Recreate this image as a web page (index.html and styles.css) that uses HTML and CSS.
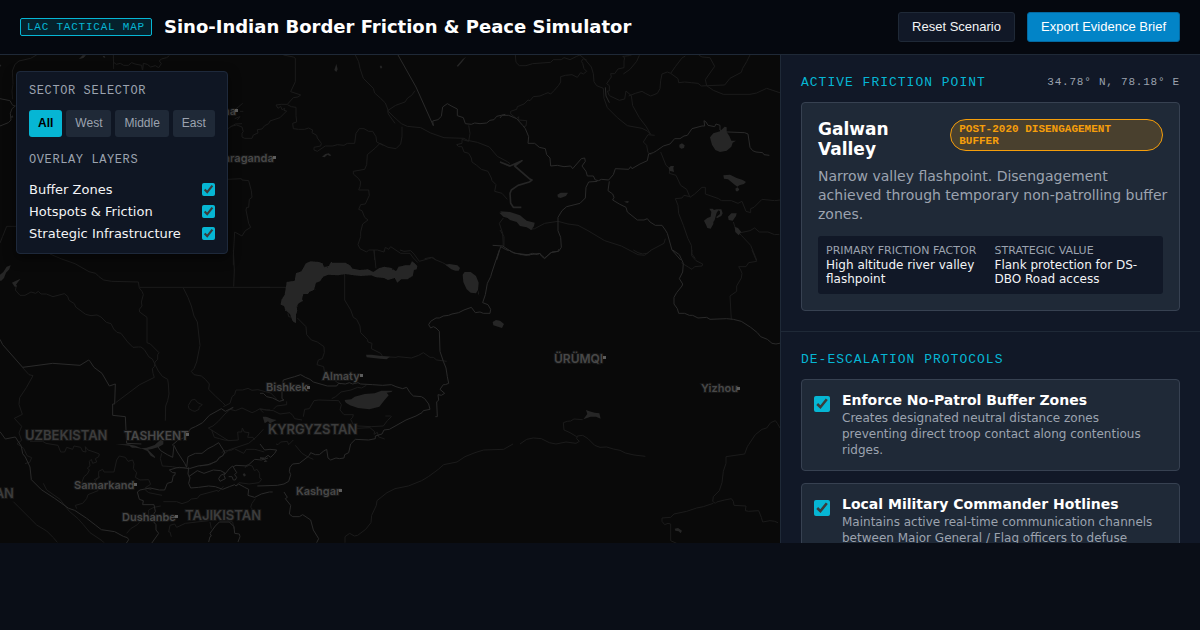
FILE: index.html
```html
<!DOCTYPE html>
<html lang="en">
<head>
    <meta charset="UTF-8">
    <meta name="viewport" content="width=device-width, initial-scale=1.0">
    <title>Sino-Indian Border Friction &amp; Peace Simulator</title>
    <link rel="stylesheet" href="styles.css">
</head>
<body>
    <header class="header">
        <div class="brand">
            <span class="badge">LAC TACTICAL MAP</span>
            <h1>Sino-Indian Border Friction &amp; Peace Simulator</h1>
        </div>
        <div class="actions">
            <button type="button" class="btn">Reset Scenario</button>
            <button type="button" class="btn btn-primary">Export Evidence Brief</button>
        </div>
    </header>

    <main class="main">
        <section class="map-area">
            <svg class="map" viewBox="0 0 780 488" preserveAspectRatio="xMinYMin slice" role="img" aria-label="Map of Central Asia">
                <defs>
                    <!-- roughens the lake shores -->
                    <filter id="shore">
                        <feTurbulence type="fractalNoise" baseFrequency="0.25" numOctaves="2" seed="4"/>
                        <feDisplacementMap in="SourceGraphic" scale="5" xChannelSelector="R" yChannelSelector="G"/>
                    </filter>
                </defs>
                <!-- north west -->
                <g transform="translate(0 -55) scale(.33333)">
                    <path class="line" d="M110 165l-18 10-35 8-12 10-8 20 2 40-3 20 2 25M340 165l1 42M341 187l8 6 12-3 10 6 14 0 10-8 10 4 20 4 2 14M428 210l2-20 12 3 10 8 14-4 10 6 8-12-6-8 6-6 16-4 8-6M50 679H20l-12 30-8 20"/>
                    <path class="border" d="M0 296l30 6 8 14 8 2-10 8-5 14 2 20-8 8-25 10"/>
                    <path class="water" d="M236 178l12-12 10 0-8 8zM308 168l6 0 2 6-6-2zM32 350l6-4 2 6-5 2zM0 193l4 4-4 3z"/>
                </g>
                <!-- south west -->
                <g transform="translate(0 195) scale(.33333)">
                    <path class="line" d="M150 12l35 15 40 14 42 24 20 5 10 10 14 10 24 4 80 2 3 18 8 10 4 10-6 22 2 12-8 10 1 8 22 16v76l10 4 26 26-4 6 0 14-8 8-2 14-6 6 2 14 4 12-44 22-72 54M700 0l3 60-2 50M420 112H810M50 105l-4 15 14 16 15 0 18-10 14 4 8-6 8 8 16 0 20 8 34-9 10 8 4 12 16 10 4 10 30 22 16 4 18-2 12 6 16 16 14 4 8 16 10 10 12 3 20 26 16 16 16-1 8 0 10 8 14 22 10 6 8 16 10 20 12 16 16 9 2 14 2 30-4 20-6 16-1 44M550 114l14 28 10 26 8 30 10 18 8 70-10 50-8 20-8 8 8 10 22 4 12 10 12 14-2 16 20 20 22 20 8 8M67 352l20 22 12 3-20 36-20 30-2 20 10 30-24 12 22 24-8 20 8 22-14 10 20 14 10 22 14 6-6 14-14 4M90 574l38 0 10 6 36 6 8 20 12 0 6-14 18 6 4-10 20 4 6 12 10 2-2-16 8 10 24 8 10 4-2 8-10 6 4 10-12 4-4-12-6 6 2 14-8 6 6 6-6 12-10 8-6 16 4 14-10 8M300 680l-12 10-6 12 12 4 0 16-30 12-4 12-12 14-22 6 4 10M282 690l14-8 0-18 12-6 4 8 30 0 8-36 8-12 18 4 8 12 14-4 4 12-2 14 10 12-4 14 14 8 26-1 6 14-16 10 18 6M40 755l50 50 20 20 30 18 20 20 12 14M130 700l10 20 40 28 28 36 26 22 16 18 20 24 36 24 6 6M565 466l10-16 10-2 8 10 14 6-10 8 0 6-12 6-8-2-10-6-2-8zM670 470l20-10 6-20 8-6 4-14 20 0 16-5 12 6 18-2 22 6 16 4 14 14 4 6M690 478l16 4 20-8 30 14 10-4 14-8 20 4 10 0M625 534l60 38 30-2-2-24 12 0 2-12 6 12 14 2-4 14 16 0 4 8M625 534l14-6 16-14 20-22 20-18 4 0M635 540l8 22 16 4 14 4 20 2M665 608l10-6 16 0 12-6 28 14 8-12 26 0 28 8M600 648l30-4 20-12 36-32 60-20 24-20 20-22M490 755l40 0 16 6 18-6 10-8 18-2 8-10 52-14 2 4 8-6 8-10M485 610l-4 16 6 22 30 2 20 4 20-2M380 850l12-14 20-12 10-12 24-14 0-18 16-8 20-4M436 720l10 8 40 8M735 654l6-10 16 4 6 14 8-4 8 12 0 14 6 4-8 10-30 4-30-4-8 8M514 860l-4-14-4 0 4-20 14-4 6 10 26-12 70-8M630 816l4 20M672 808l26 8 4 20M766 746l-10 14-4 12 8 8"/>
                    <path class="border" d="M0 268l8 16 60 68 90-12 82 6 26-16 4 4 12 18 24 18 22 38 18-6-2 60-6 0 0 34 38 4 4 80 44 2M0 545l16 22 30-6 18 28 4 22 8 10 14 30 4 38 30 30 40 26 42 30 18 6 36 24 26 20 18 14 40 6 26 14 12 4 4 6-8 12 2 10M472 588l10 14 20 12 16 8 4-36 10 20 22 34 6 12 4-32 22-10 20 0 18-14 16-8 16-10 18 28-6 12-10 4-8 12-26 10-30 4-26 8-30-4-10 2-20 6 10 8 8 0-2 8-4 0-4 20-14 4-8 20-16 0-28-6-30 6-8 6 6 22 12 4-2 12 34 0 4 20-8 14 0 14 10 12 0 16 8 10-24 34-2 10M516 586l16-14 26-12 6-12 8-12 14-6 22-12 20-22 36-20 12 8 24-12M566 652l-2 20 6 12-4 16 6 14 24-2 30-4 20 2 22 8 20-8 16-6 4 4 8-6 18 10 12 6-2 18 20 6 20-10 24-6 10 0M566 680l26-18 20 8 28-10 22 2 14 8-14 6-6 10 4 8 16-8-4-10 16-20 10-8 12 20-6 6 6 8-4 8-6 0-4-10-10 0M700 650l8-4 34 2 22-20 20 2 20-6M626 876l4-16 4-2-4-8 16-22 12-12 30 0 14 14 2 20 14 2 2 8-6 16"/>
                    <path class="water" d="M0 74l10-8 10-16 12-4-4 12-10 10-6 16-8 8H0zM36 98l12-6 14-6-8 10-6 8 2 6-6 0zM346 583l40 0 20 4 18 8 16-2 24-8 20-18 6 2 0 14-14 8-20 6-12 2 20 20 2 6-14-8-10-14-14-6-22-4-10 0-8-6zM792 502l18 2v10zM728 672l6-2 4 6-6 4z"/>
                </g>
                <!-- south centre -->
                <g transform="translate(260 195) scale(.33333)">
                    <path class="line" d="M0 112H80M254 60v90l18 30 8 22 10 6 10 20 2 20 20 20 2 8 12 4-2 16 28 14 6 10 40 2 6-2 40 4 22-8 14-8 20 14 10 0 10 8 30 4M342 0l6 55M420 0l12 4 20-2 10 10 16 22 28-8 12-4 10 8 20 8 14 8M112 204l26 26 2 24 14 16 18 6 20 14 1 18-6 18-12 4-4 14 20 6 2 14 18 14 6 2 12 16 14 6M215 446l12-6 16-14 30-6 20-8 12 2 14-8M130 500l4-22 14-2 14-24 14-2 60 2 8 12-4 16 12 14 28 0-2 8-6 6 8 16 14 4 40 2 36-2 12-16 12-12-2-2-16 0M40 478l10-10 30-4 0-10M0 478l40 4 20 10 30-4 8 8 6 10 22 4M255 878l0-18 14-10 14 8 10-2 24-18 16-20 2-22 14-30 2-14 30-24 24-12 40-8 40-16 20-12 30-22 16-14 40-8 24-16 30-12 26-8 60-2 28-16M290 535l40-2 14 12-2 8 10-6 4 14 18 6M106 586l20 24 20 12 14 6M100 570l-14 14-4-10-20 2-8 8-6-2M0 478l10 10M88 180l-4 10 2 10 14 2M372 0l2 4"/>
                    <path class="border" d="M70 390l20-6 14-4 18-6 14 8 14 6 10 8 14 4 28 8 28 0 6-8 20 2 12-4 10 4 16-4 8 4 36 2 30 2 26-2 14 6 20 6 12-4 10 16 10 10 24 2 10 6 12 16 4 16-20 4-4 6-18 10-30 12-50 28-16 2-6 12-20 6 0 8-20 4-40-2-14 14-6 26-12 6-2 10-14 2-10-2-16 6-8-6-4-26-10 6-12 10-12 0-14-6-4 8-4 4-26 20-20 2-8 10-2 12 4 10-6 20-14 8-20 4-60 2M70 390l-4 20 0 36 6 4-14 4-20-10-18-4-10-10-10 0M718 0l-10 30-12 36-4 14-10 20-6 34-8 24 16 6 8 14-2 12-20 0-10-4-14 2-12-16-22 8-16 8-20 4-10 4-16 2-12 6-10 0-16 10-6 10 6 10 8-4 8 4 10 10 2 60 10 30 8 20 4 26 4 20-10 4-6 0-10 14 14 12-10 6-10-2 2 16-6 6 2 44-6 0M746 0l20 10 44 5M72 726l10 16-6 4 16 20-4 26 10 8 20 0 10-6 24 16 8 30 16 26-6 12M0 582l14 18 16-2 20 2-6 10-12 12-8-6-10 8-14 0 12 2 8 8-8 0"/>
                    <path class="water" filter="url(#shore)" d="M64 150l10-16 6-38 24-4 4-22 16-6 14-24 14-6 24 2 12 4 4 12 14-4 6-10 20 0 24 0 14 8 8 10 22 4 24-2 16 8 18-12 16-4 20 4 14 10 8-14 20-4 14 0 6-12 8 6 8 8-2 10-8 2-4 18-16 10-18 0-12 10-8-14-20 6-12-6-24-2-14-6-30 2-24-2-24-4-20 4-32-2-14 6-10 14-12 4-6 22-14 6-4 6-14 0-4 16 4 4-14 8-6 10 2 12-4 12 0 26-10-6-8-22-14-12-4-12-10-4z"/>
                    <path class="water" d="M556 44l12-2 24 4 8 8-4 8-10 0-12-4-10-8zM608 74l6-8 18 0 16 12 8 20-2 22-6 10-16-2-12-10-10-22zM608 94l-2-20M654 120l4 18 8 16-12-24zM698 216l10-6 12 2 12 10-6 12-12-4-14-4zM318 314l16 0 30 4 26 2-10 8-20-2-40-4zM254 450l20-2 10-8 30-8 30-2 20-8 34 0-4 4-14 2 6 8-14 16-14 18-30 8-34-4-24-8-10-6-4-4zM8 500l10 0 20 8 12 2-20 10-6-6-10 6z"/>
                </g>
                <!-- south east -->
                <g transform="translate(520 195) scale(.33333)">
                    <path class="line" d="M0 582l20-14 20-4 24 2 24 12 20 4 30-6 30 4 10-6-8-8 2-8 16-2 16 10 20 20 16 6 20-1 20 6 20 4 16 8 26 6 34 4M170 560l-20-12-18-8-2-22 12-4 10-1 10-6 26 2M340 0l14 8 14 4 14-2 12-10M516 0l-2 16 14 16 20 10-2 6-22 2-8 8-10-6-16-10-6-4M696 0l14 34-24 4-8 12-22 0 6 10 4 10-2 14-14 24 0 16-20 14 4 70M780 534l-8-14-6-8-14 6-12 16-14 4-20 16-20 30-4 6-8 22-56 8 0 20-8 24-4 34-8 24-18 18-2 14 8 6 4-4 24-6 20-4 6 8 2 12 36 2-2 14 10 2 30-2 8 20 4 14 22-4 14 2 10 4M580 760l-30 10-20 4-30 10-38 8-10 10-26 2 0 10 8 10 10-4 8 2 0 50 18 8"/>
                    <path class="border" d="M0 14l24 0 14-4 14 4 8-4 4 8 10 8 18-18 22-4 2-6M458 0l20 14 12 26-2 26-10 20 10 16-2 6-16 20-8 14 0 20 10 14 4 14 18 0 14 6 10 0 16 8 26-2 10 6 50-2 20 2 24 6 28 18 20 16 10 12 20 8 14 12 12 2 20-4"/>
                    <path class="water" d="M190 508l12-16-4-12 10 4 16 4 14 2 4 16-14-6-16 0zM464 836l10-2 12 8-4 8-6-6-10-2z"/>
                </g>
                <!-- north centre -->
                <g transform="translate(220 -5) scale(.33333)">
                    <path class="line" d="M190 15l30 6 6 4 0 70-14 30 30 10-8 6-14 2-18 20-18 0-16 2 6 10 8-6 4 10 8-4-2 6 8 2-20 20-30 10-4 8-12 6-8 10-14 2 2 10-14 6-4 10-12 0-10 0-8-4 0-12 4-4-4-14-16-6-18 4-10 10-10 2M202 164l12 6 14 2 0 24 2 20-12 4 2 16 16 2 18 0 12-4 12 6-2 8 14 8 2 8 12 16-2 8-20 4 0 8 10 4 24-16 22 0 14-4 20 2 10-6 22 0 4-30 10-14 14 0 14 8 12 0 10 16 2 16 20 10M406 15l10 20 4 20 10 30 30 30 4 14 18 16 14 14 10 26 16 16 22 20 18 8 40 4 30 16 40 14 60 2 10 6 30 6 36 14 24 28 30 16 8 6M546 230l0 30-4 22-14 14-24-4-24-12-14 14-24 20-2 30-6 14-34 6 0 8 16 14 6 10-2 14-4 10 30 0 2 16-12 26-14 2-6 14 10 4 8 20 10 8-16 12-6 24 0 14-8 24 6 12 20 10 6-6 26 0 20 6 4-14 10 6 6-8 30 20 28 0 10 14 14 14M462 600l2 30M585 122l-10 14-12 8-8 12-28 10-24 16 2 10 20 28M24 236l22-14 20-1M24 388l40-2 2 4 20 2 8 30 2 20-8 6-2 24-6 0-2 8 8 40 6 12-16 10-10 16-22-12-4 70v30M746 226l4 24-4 24-20-6 0 12-16 4 6 6 10 0 6 16 14 4 8 14 2 12 14 10 14 12 20 6 10 20 2 8 12 12-4 20 22 6 16 18M850 504l-12 16 10 30 2 40M46 178l10-8 12-10M44 206l16-6-8 10M60 184l10 0M614 626l20-4 14 8"/>
                    <path class="border" d="M534 15l54 96 52 116-2-14 16-4 10-10 4-28 14-10 14 8 16 8 0 20 18 6 6 18 18 2 10-4 16 2 20-2 10-8 12-2 8-10 26-6M830 630l12-40 14 8 10 4"/>
                    <path class="water" d="M343 60l6-18 4 16-4 8zM479 50l4-4 4 6-4 4zM306 320l10-8 10-2 8 6-4 2-8-4-8 8zM710 48l18-20 10-8-10 14-14 16zM838 488l14-2 18 2v18l-20-6z"/>
                </g>
                <!-- north east -->
                <g transform="translate(500 -5) scale(.33333)">
                    <path class="line" d="M46 15l2 22 10 10 20 0 20-6 54-4 8-8 24 0 8-6 18 6 20-10 10-4 14 12 20 24 6 20 2 24 8 12 20 8 2 30 10 28 30 30 30 24 44 8 16 8 10 10-14-24-20-26-20-36-4-30-16-14-4 24-16 4-30-14-6-14 6 0 0-16-8-6 14-20-2-10 12 0 10-14 18-4 0-20 2-10-6-4 20-2 20-8-10 2-10-6-10 4-4-8-12-2-10-6M260 30l-10-4-6 8 4 6 4 16 8 8-10 8-8-4-10 14-16-8-20 2-14 4 0 16-6 10-14 16-10 10-8-4-10 4-14 6-20 2-10 12-6-2-12 12-20 8-2 8-18 6 0 8 18 14 6-6 0 10 24 2-2 16-8 2M370 72l20-14 20-24 8-18M386 138l20-8 20-6 10 6 16 8 20-8 8-14 2-24 4-20 16-6 10 4 14-20 20-26 10-6M512 70l22 16 2 12 18-2 20 2 20 2 10 8 20-1 50-2 16-20 34-18 4-12 12-20 10-20M596 15l10 6 24 2 14 26-28 40 4 18 20 14 30 12 80 0 20-4 30-14 60 20M464 256l-20-2-14 22 10 10 4 22 10 6M482 306l16 40 12 10-2 14 20 6 14 30 18 12 10 24 14-10 22-20 10 0 0 20 40 14 8 6 30 0 20 8 12-6 12 30 14 4 0-12 10-4 24-24 38 4 34-4 20-16M570 440l-18-4-6 8-20 2 8 20 2 24 14 36 14 40 10 20 2 26 10 14M700 516l8 24 16 16 28 30 18 44M722 548l28-6 14-8 14 12 26 0 20 8 14-1M0 336l30 14M90 538l14-2 30-16 40-6 30 8 30 4 30 16 50 30 50 16 50 26 20 2 20-16 38-20 4-14M0 540l12 20 0 28"/>
                    <path class="border" d="M0 204l6-8 20 0 24 10 18 20 8 10 10 24-2 20 20 0 14 12 18 4 4 18 10 10 2 24 20-2 20 4 20-2 6 8 26-30 10-2 2 10-10 14 12 16 4 14 18 0 6 12 10 2 8-4 22 2 14-16 6-18 40 2 6-8 4 6 24-14 22-10 4-20 14-4 10-6 20-14 20-6 14-16 16 0 12-8 10-2 14-20 30-8 8 0-2-16 6 4 6 10 20 4 4-8 12 4 0 14 10 6 14 0 50 2 10 4 6 40 8 10 10 4 20 2 4 6 16 2M328 394l-4 28 14 10 4 10-4 8 20 12 20 10 4 14 30 24 20 0 10-4 8 10 16 10 20 0 10 14 6 10 14 50 26 30M292 394l-26 2-8 16-2 32-16 16-40 10-14 12-12 20 0 40 8 20 2 30-8 12-20 2-22 18-16-14-40 6-40-8-30-20-30-2M316 112l2 26 10 20"/>
                    <path class="water" d="M630 262l10-12 20-6 14-14 6 2 0 14 8 12 6 14 14 0-10 6-4 12-14 12-20 4-14-6-10-16-4-14zM538 284l8-4 8 6-2 8-8 2-6-4zM506 354l6-6 10 0-2 6 2 12-8-2-6-2zM670 376l20-2 20 10 18 6 10 6-6 6-14 4-6 4-8-6-20-16-12-2zM706 416l6-4 6 6-4 6-6 0zM612 512l10-8 10-4 2-14-6-10 10 0 4 4 8-2 6 2-6 8-6 22-4 6 0 6-8 14-10-2-4-10zM650 478l14 0 4 12-4 8-12 6-4-2 12-10 0-8zM684 500l10-10 16 0-2 8-10 14-12-2zM704 530l10 4 10 12-8 10-10-10zM172 434l10-6 22 0-6 10-16 6-8-2zM372 455l10-2 6 2-6 4zM0 484l30 2 30 10 20 16 24 6-2 10-8 12-14-8-20-4-10-12-20-6z"/>
                    <path class="river" d="M0 336l30 12 36-16-22 16 44 38 8 4-8 6-34 10-20 14-4 10 2 30 8 12 24 0"/>
                </g>
                <g class="cities">
                    <text x="236" y="60" text-anchor="end">Astana</text><rect x="235" y="54" width="3" height="3"/>
                    <text x="216" y="107">Karaganda</text><rect x="273" y="101" width="3" height="3"/>
                    <text x="322" y="325">Almaty</text><rect x="360" y="319" width="3" height="3"/>
                    <text x="266" y="336">Bishkek</text><rect x="307" y="331" width="3" height="3"/>
                    <text x="74" y="434">Samarkand</text><rect x="134" y="428" width="3" height="3"/>
                    <text x="122" y="466">Dushanbe</text><rect x="175" y="460" width="3" height="3"/>
                    <text x="296" y="440">Kashgar</text><rect x="339" y="434" width="3" height="3"/>
                    <text x="701" y="337">Yizhou</text><rect x="737" y="332" width="3" height="3"/>
                    <text x="124" y="385" class="capital">TASHKENT</text><rect x="186" y="378" width="3" height="3"/>
                    <text x="554" y="308" class="capital">ÜRÜMQI</text><rect x="603" y="301" width="3" height="3"/>
                </g>
                <g class="countries">
                    <text x="25" y="385">UZBEKISTAN</text>
                    <text x="268" y="379">KYRGYZSTAN</text>
                    <text x="185" y="465">TAJIKISTAN</text>
                    <text x="14" y="443" text-anchor="end">TURKMENISTAN</text>
                </g>
            </svg>

            <div class="panel">
                <h2 class="panel-title">SECTOR SELECTOR</h2>
                <div class="sectors">
                    <button type="button" class="sector active">All</button>
                    <button type="button" class="sector">West</button>
                    <button type="button" class="sector">Middle</button>
                    <button type="button" class="sector">East</button>
                </div>
                <h2 class="panel-title">OVERLAY LAYERS</h2>
                <div class="layers">
                    <label class="layer">Buffer Zones <input type="checkbox" checked></label>
                    <label class="layer">Hotspots &amp; Friction <input type="checkbox" checked></label>
                    <label class="layer">Strategic Infrastructure <input type="checkbox" checked></label>
                </div>
            </div>
        </section>

        <aside class="sidebar">
            <section class="section">
                <h2 class="section-title">ACTIVE FRICTION POINT <span class="coords">34.78° N, 78.18° E</span></h2>
                <div class="card">
                    <div class="card-head">
                        <h3>Galwan Valley</h3>
                        <span class="status">POST-2020 DISENGAGEMENT BUFFER</span>
                    </div>
                    <p class="card-text">Narrow valley flashpoint. Disengagement achieved through temporary non-patrolling buffer zones.</p>
                    <dl class="facts">
                        <div>
                            <dt>PRIMARY FRICTION FACTOR</dt>
                            <dd>High altitude river valley flashpoint</dd>
                        </div>
                        <div>
                            <dt>STRATEGIC VALUE</dt>
                            <dd>Flank protection for DS-DBO Road access</dd>
                        </div>
                    </dl>
                </div>
            </section>

            <section class="section">
                <h2 class="section-title">DE-ESCALATION PROTOCOLS</h2>
                <div class="protocols">
                    <label class="protocol">
                        <input type="checkbox" checked>
                        <span>
                            <strong>Enforce No-Patrol Buffer Zones</strong>
                            <small>Creates designated neutral distance zones preventing direct troop contact along contentious ridges.</small>
                        </span>
                    </label>
                    <label class="protocol">
                        <input type="checkbox" checked>
                        <span>
                            <strong>Local Military Commander Hotlines</strong>
                            <small>Maintains active real-time communication channels between Major General / Flag officers to defuse</small>
                        </span>
                    </label>
                </div>
            </section>
        </aside>
    </main>
</body>
</html>
```
FILE: styles.css
```css
:root {
    --bg: #0a0e17;
    --surface: #111827;
    --card: #1f2937;
    --line: #1f2937;
    --card-line: #374151;
    --text: #f3f4f6;
    --muted: #9ca3af;
    --cyan: #06b6d4;
    --amber: #f59e0b;
    --mono: "Liberation Mono", "Courier New", monospace;
}

* { box-sizing: border-box; margin: 0; padding: 0; }

body {
    display: flex;
    flex-direction: column;
    height: 100vh;
    padding-bottom: 87px;
    overflow: hidden;
    background: var(--bg);
    color: var(--text);
    font-family: "DejaVu Sans", sans-serif;
}

button { font-family: "Liberation Sans", Arial, sans-serif; cursor: pointer; }
input[type="checkbox"] { accent-color: var(--cyan); cursor: pointer; }

/* Header */
.header {
    display: flex;
    justify-content: space-between;
    align-items: center;
    padding: 12px 20px;
    background: #05080f;
    border-bottom: 1px solid var(--line);
}
.brand, .actions { display: flex; align-items: center; gap: 12px; }
.header h1 { font-size: 18px; line-height: 22px; color: #fff; }
.badge {
    padding: 2px 6px;
    border: 1px solid var(--cyan);
    border-radius: 2px;
    background: rgba(6, 182, 212, 0.15);
    color: var(--cyan);
    font: 11px/12px var(--mono);
    letter-spacing: 0.07em;
}
.btn {
    height: 30px;
    padding: 0 13px 1px;
    border: 1px solid var(--line);
    border-radius: 3px;
    background: var(--surface);
    color: var(--text);
    font-size: 13px;
}
.btn-primary { background: #0284c7; border-color: #0369a1; color: #fff; }

.main { display: flex; flex: 1; min-height: 0; }

/* Map */
.map-area { position: relative; flex: 1; min-width: 0; overflow: hidden; background: #090909; }
.map { display: block; width: 100%; height: 100%; }
.line, .border, .river { fill: none; stroke-linejoin: round; }
.line { stroke: #1b1b1b; stroke-width: 3; }
.border { stroke: #2a2a2a; stroke-width: 3; }
.river { stroke: #262626; stroke-width: 5; }
.water { fill: #262626; }
.cities, .countries { font-family: Inter, "Open Sans", sans-serif; font-weight: 600; paint-order: stroke; stroke: #151515; stroke-width: 2px; }
.cities { font-size: 11px; fill: #484848; }
.cities .capital { font-size: 12px; }
.cities rect { fill: #5c5c5c; stroke: none; }
.countries { font-size: 13px; fill: #3c3c3c; }

.panel {
    position: absolute;
    top: 16px;
    left: 16px;
    padding: 12px;
    border: 1px solid #1e293b;
    border-radius: 4px;
    background: #0f1623;
    box-shadow: 0 4px 12px rgba(0, 0, 0, 0.5);
}
.panel-title {
    color: var(--muted);
    font: 12px/14px var(--mono);
    letter-spacing: 0.05em;
}
.sectors { display: flex; gap: 4px; margin: 12px 0 16px; }
.sector {
    height: 27px;
    padding: 0 9px 1px;
    border: 0;
    border-radius: 3px;
    background: var(--card);
    color: var(--muted);
    font-size: 12px;
}
.sector.active { background: var(--cyan); color: #000; font-weight: bold; }
.layers { display: flex; flex-direction: column; gap: 7px; margin-top: 15px; }
.layer { display: flex; justify-content: space-between; align-items: center; font-size: 13px; line-height: 15px; }
.layer input { width: 13px; height: 13px; }

/* Sidebar */
.sidebar { flex: 0 0 35%; overflow: hidden; background: var(--surface); border-left: 1px solid var(--line); }
.section { padding: 20px; }
.section + .section { border-top: 1px solid var(--line); }
.section-title {
    display: flex;
    justify-content: space-between;
    align-items: center;
    margin-bottom: 12px;
    color: var(--cyan);
    font: 13px/15px var(--mono);
    letter-spacing: 1px;
}
.coords { color: var(--muted); font-size: 11px; letter-spacing: 0.07em; }

.card { padding: 16px; background: var(--card); border: 1px solid var(--card-line); border-radius: 4px; }
.card-head { display: flex; justify-content: space-between; align-items: flex-start; margin-bottom: 8px; }
.card-head h3 { font-size: 17px; line-height: 20px; color: #fff; }
.status {
    padding: 3px 8px;
    border: 1px solid var(--amber);
    border-radius: 16px;
    background: rgba(245, 158, 11, 0.2);
    color: var(--amber);
    font: bold 11px/12px var(--mono);
}
.card-text { margin: 0 -8px 12px 0; color: var(--muted); font-size: 14px; line-height: 19px; }
.facts {
    display: grid;
    grid-template-columns: 1fr 1fr;
    gap: 8px;
    padding: 8px;
    border-radius: 3px;
    background: var(--surface);
    font-size: 12px;
    line-height: 14px;
}
.facts dt { color: var(--muted); font-size: 11px; }

.protocols { display: flex; flex-direction: column; gap: 12px; }
.protocol {
    display: flex;
    gap: 12px;
    align-items: flex-start;
    padding: 12px;
    border: 1px solid var(--card-line);
    border-radius: 4px;
    background: var(--card);
}
.protocol input { flex: none; width: 16px; height: 16px; margin-top: 4px; }
.protocol strong { display: block; margin-bottom: 2px; color: #fff; font-size: 14px; line-height: 16px; }
.protocol small { display: block; color: var(--muted); font-size: 12px; line-height: 16px; }
```
